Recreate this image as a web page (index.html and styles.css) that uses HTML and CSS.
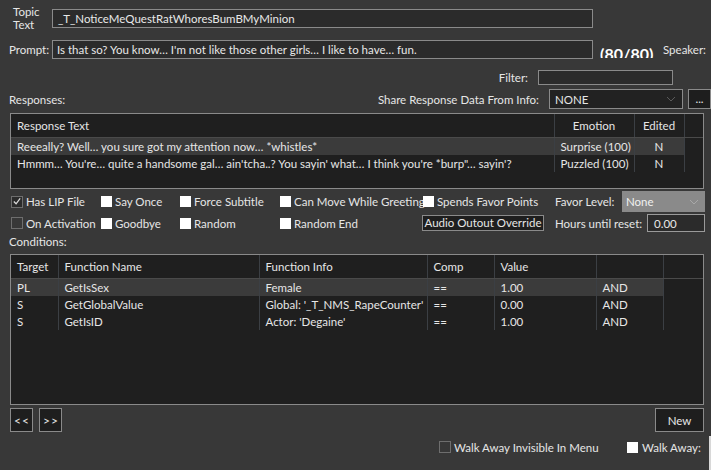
FILE: index.html
```html
<!DOCTYPE html>
<html lang="en">
<head>
  <meta charset="UTF-8">
  <title>Topic Info</title>
  <link rel="stylesheet" href="styles.css">
</head>
<body>
  <div class="app">
    <div class="row topic-row">
      <label class="topic-label">Topic<br>Text</label>
      <div class="textbox wide">_T_NoticeMeQuestRatWhoresBumBMyMinion</div>
    </div>

    <div class="row prompt-row">
      <label class="prompt-label">Prompt:</label>
      <div class="textbox wide">Is that so? You know… I'm not like those other girls… I like to have… fun.</div>
      <span class="count"><span>(80/80)</span></span>
      <span class="speaker">Speaker:</span>
    </div>

    <div class="row filter-row">
      <span class="right-label">Filter:</span>
      <div class="textbox filter-box"></div>
    </div>

    <div class="row share-row">
      <span class="section-label">Responses:</span>
      <span class="right-label">Share Response Data From Info:</span>
      <div class="combo share-combo">
        <span>NONE</span>
        <svg width="10" height="6" viewBox="0 0 10 6"><polyline points="1,1 5,5 9,1" fill="none" stroke="#5a5a5a" stroke-width="1"/></svg>
      </div>
      <button class="btn dots">...</button>
      <span class="edge-yellow"></span>
    </div>

    <div class="grid responses">
      <table>
        <colgroup>
          <col style="width:543px">
          <col style="width:80px">
          <col style="width:50px">
          <col>
        </colgroup>
        <thead>
          <tr><th class="left">Response Text</th><th>Emotion</th><th>Edited</th><th></th></tr>
        </thead>
        <tbody>
          <tr class="selected"><td class="left">Reeeally? Well… you sure got my attention now… *whistles*</td><td>Surprise (100)</td><td>N</td><td class="blank"></td></tr>
          <tr><td class="left">Hmmm… You're… quite a handsome gal… ain'tcha..? You sayin' what… I think you're *burp"… sayin'?</td><td>Puzzled (100)</td><td>N</td><td class="blank"></td></tr>
        </tbody>
      </table>
    </div>

    <div class="row flags-row">
      <label class="flag c1"><span class="box checked"><svg width="11" height="11" viewBox="0 0 11 11"><polyline points="2,5.5 4.5,8 9,2" fill="none" stroke="#d8d8d8" stroke-width="1.4"/></svg></span>Has LIP File</label>
      <label class="flag c2"><span class="box white"></span>Say Once</label>
      <label class="flag c3"><span class="box white"></span>Force Subtitle</label>
      <label class="flag c4"><span class="box white"></span>Can Move While Greeting</label>
      <label class="flag c5"><span class="box white"></span>Spends Favor Points</label>
      <span class="favor-label">Favor Level:</span>
      <div class="combo favor-combo">
        <span>None</span>
        <svg width="10" height="6" viewBox="0 0 10 6"><polyline points="1,1 5,5 9,1" fill="none" stroke="#a8a8a8" stroke-width="1"/></svg>
      </div>
    </div>

    <div class="row flags-row second">
      <label class="flag c1"><span class="box empty"></span>On Activation</label>
      <label class="flag c2"><span class="box white"></span>Goodbye</label>
      <label class="flag c3"><span class="box white"></span>Random</label>
      <label class="flag c4"><span class="box white"></span>Random End</label>
      <button class="btn audio">Audio Outout Override</button>
      <span class="hours-label">Hours until reset:</span>
      <div class="textbox hours-box">0.00</div>
    </div>

    <div class="row cond-label">
      <span class="section-label">Conditions:</span>
    </div>

    <div class="grid conditions">
      <table>
        <colgroup>
          <col style="width:47px">
          <col style="width:201px">
          <col style="width:168px">
          <col style="width:67px">
          <col style="width:102px">
          <col style="width:67px">
          <col>
        </colgroup>
        <thead>
          <tr><th>Target</th><th>Function Name</th><th>Function Info</th><th>Comp</th><th>Value</th><th></th><th></th></tr>
        </thead>
        <tbody>
          <tr class="selected"><td>PL</td><td>GetIsSex</td><td>Female</td><td>==</td><td>1.00</td><td>AND</td><td class="blank"></td></tr>
          <tr><td>S</td><td>GetGlobalValue</td><td>Global: '_T_NMS_RapeCounter'</td><td>==</td><td>0.00</td><td>AND</td><td class="blank"></td></tr>
          <tr><td>S</td><td>GetIsID</td><td>Actor: 'Degaine'</td><td>==</td><td>1.00</td><td>AND</td><td class="blank"></td></tr>
        </tbody>
      </table>
    </div>

    <div class="row nav-row">
      <button class="btn nav">&lt;&lt;</button>
      <button class="btn nav">&gt;&gt;</button>
      <button class="btn new">New</button>
    </div>

    <div class="row walk-row">
      <label class="flag walk-menu"><span class="box empty"></span>Walk Away Invisible In Menu</label>
      <label class="flag walk"><span class="box white"></span>Walk Away:</label>
      <span class="edge-white"></span>
    </div>
  </div>
</body>
</html>
```

FILE: styles.css
```css
body {
  margin: 0;
  background-color: #383838;
  color: #e6e6e6;
  font-family: Lato, "Noto Sans", sans-serif;
  font-size: 11.5px;
  width: 711px;
  height: 470px;
  overflow: hidden;
}
.app {
  padding-left: 9px;
  width: 702px;
}
.row {
  display: flex;
  align-items: center;
  white-space: nowrap;
}
.textbox {
  box-sizing: border-box;
  background-color: #2b2b2b;
  border: 1px solid #8a8a8a;
  color: #e8e8e8;
  padding: 0 5px;
  height: 19px;
  line-height: 17px;
}
.wide {
  width: 541px;
}
.topic-row {
  margin-top: 5px;
  height: 26px;
}
.topic-label {
  width: 39px;
  padding-left: 4px;
  line-height: 13px;
}
.prompt-row {
  margin-top: 9px;
  height: 19px;
}
.prompt-label {
  width: 43px;
}
.prompt-row .textbox {
  padding-left: 4px;
}
.count {
  margin-left: 7px;
  width: 56px;
  height: 11px;
  overflow: hidden;
  align-self: flex-end;
  margin-bottom: 1px;
}
.count span {
  display: block;
  font-weight: bold;
  font-size: 16px;
  line-height: 15px;
  color: #ffffff;
  margin-top: -1px;
}
.speaker {
  margin-left: 7px;
}
.filter-row {
  margin-top: 11px;
  height: 15px;
  padding-right: 38px;
}
.right-label {
  flex: 1;
  text-align: right;
  padding-right: 10px;
}
.filter-box {
  width: 135px;
  height: 15px;
}
.share-row {
  margin-top: 4px;
  height: 20px;
}
.section-label {
  width: 120px;
}
.combo {
  box-sizing: border-box;
  display: flex;
  align-items: center;
  justify-content: space-between;
  height: 20px;
  padding: 0 6px 0 5px;
}
.share-combo {
  width: 134px;
  background-color: #222222;
  border: 1px solid #8a8a8a;
}
.btn {
  box-sizing: border-box;
  background-color: #1e1e1e;
  border: 1px solid #8a8a8a;
  color: #e6e6e6;
  font-family: inherit;
  font-size: 11.5px;
  padding: 0;
  cursor: pointer;
}
.dots {
  width: 23px;
  height: 20px;
  margin-left: 5px;
  line-height: 12px;
}
.edge-yellow {
  width: 2px;
  height: 7px;
  margin-left: 9px;
  margin-right: -11px;
  background-color: #c8b84a;
}
.grid {
  box-sizing: border-box;
  margin-left: 1px;
  width: 694px;
  border: 1px solid #8a8a8a;
  background-color: #1f1f1f;
  overflow: hidden;
}
.grid table {
  border-collapse: collapse;
  table-layout: fixed;
  width: 100%;
}
.grid th {
  height: 23px;
  font-weight: normal;
  color: #e6e6e6;
  border-left: 1px solid #3b3f44;
  border-bottom: 1px solid #4a4a4a;
  text-align: left;
  padding: 0 6px;
  white-space: nowrap;
}
.grid td {
  height: 17px;
  padding: 0 6px;
  border-left: 1px solid #3b3f44;
  overflow: hidden;
  white-space: nowrap;
  color: #e6e6e6;
}
.grid th:first-child,
.grid td:first-child {
  border-left: none;
}
.grid tbody tr:first-child td {
  border-top: 1px solid #1f1f1f;
}
.grid tr.selected td {
  background-color: #3b3b3b;
}
.grid tr.selected td.blank {
  background-color: #1f1f1f;
}
.responses {
  margin-top: 4px;
  height: 76px;
}
.responses th,
.responses td {
  text-align: center;
}
.responses th.left,
.responses td.left {
  text-align: left;
}
.conditions {
  margin-top: 6px;
  height: 151px;
}
.flags-row {
  margin-top: 2px;
  height: 21px;
  padding-left: 2px;
}
.flags-row.second {
  height: 18px;
}
.flag {
  display: flex;
  align-items: center;
}
.box {
  box-sizing: border-box;
  flex-shrink: 0;
  width: 12px;
  height: 12px;
  margin-right: 3px;
  display: flex;
  align-items: center;
  justify-content: center;
}
.box.white {
  background-color: #ffffff;
  width: 11px;
  height: 11px;
}
.box.checked {
  border: 1px solid #6e6e6e;
  background-color: #2b2b2b;
}
.box.empty {
  border: 1px solid #6e6e6e;
}
.c1 { width: 90px; flex-shrink: 0; }
.c2 { width: 79px; flex-shrink: 0; }
.c3 { width: 100px; flex-shrink: 0; }
.c4 { width: 143px; flex-shrink: 0; }
.c5 { width: 132px; flex-shrink: 0; }
.favor-label {
  width: 67px;
  flex-shrink: 0;
}
.favor-combo {
  width: 83px;
  height: 21px;
  background-color: #8a8a8a;
  color: #f0f0f0;
  padding-left: 4px;
}
.audio {
  flex-shrink: 0;
  width: 122px;
  height: 16px;
  line-height: 14px;
  margin-left: -1px;
  margin-right: 11px;
}
.hours-label {
  width: 92px;
  flex-shrink: 0;
}
.hours-box {
  width: 58px;
  height: 18px;
  background-color: #2b2b2b;
  border-color: #9a9a9a;
  padding-left: 6px;
}
.cond-label {
  margin-top: 2px;
  height: 14px;
}
.nav-row {
  margin-top: 3px;
  height: 24px;
  padding-left: 1px;
}
.nav {
  width: 23px;
  height: 24px;
  margin-right: 6px;
  font-size: 12px;
  letter-spacing: 1px;
  padding-left: 1px;
}
.new {
  width: 49px;
  height: 24px;
  margin-left: auto;
  margin-right: 7px;
}
.walk-row {
  margin-top: 6px;
  height: 18px;
}
.walk-menu {
  margin-left: 430px;
  width: 188px;
}
.walk .box {
  margin-right: 4px;
}
.edge-white {
  width: 2px;
  height: 40px;
  margin-left: auto;
  align-self: flex-start;
  margin-top: -2px;
  background-color: #d8d8d8;
}
```
